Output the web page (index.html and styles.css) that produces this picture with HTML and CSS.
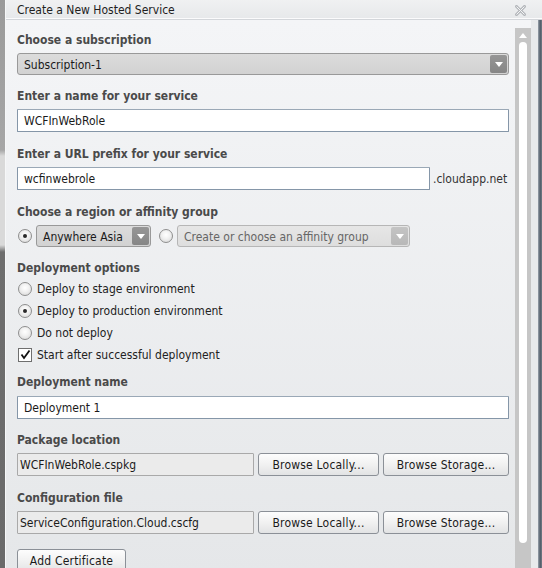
FILE: index.html
```html
<!DOCTYPE html>
<html>
<head>
<meta charset="utf-8">
<link rel="stylesheet" href="styles.css">
</head>
<body>
<div class="page">
  <div class="backdrop"></div>
  <div class="dialog">
    <div class="titlebar">
      <span class="title">Create a New Hosted Service</span>
      <svg class="close" width="11" height="11" viewBox="0 0 11 11"><path d="M1.5 1.5 L9.5 9.5 M9.5 1.5 L1.5 9.5" stroke="#b4b7bb" stroke-width="3" stroke-linecap="square"/><path d="M1.5 1.5 L9.5 9.5 M9.5 1.5 L1.5 9.5" stroke="#f4f5f6" stroke-width="1"/></svg>
    </div>
    <div class="body">
      <div class="content">
        <div class="label">Choose a subscription</div>
        <div class="select wide sel-first"><span class="sel-text">Subscription-1</span><span class="arrow"><svg width="8" height="5" viewBox="0 0 8 5"><path d="M0 0 H8 L4 5Z" fill="#fff"/></svg></span></div>

        <div class="label g12">Enter a name for your service</div>
        <div class="input wide">WCFInWebRole</div>

        <div class="label g13">Enter a URL prefix for your service</div>
        <div class="row">
          <div class="input url">wcfinwebrole</div>
          <span class="suffix">.cloudapp.net</span>
        </div>

        <div class="label g13">Choose a region or affinity group</div>
        <div class="row region">
          <span class="radio checked"></span>
          <div class="select region-sel"><span class="sel-text">Anywhere Asia</span><span class="arrow"><svg width="8" height="5" viewBox="0 0 8 5"><path d="M0 0 H8 L4 5Z" fill="#fff"/></svg></span></div>
          <span class="radio second"></span>
          <div class="select disabled affinity"><span class="sel-text">Create or choose an affinity group</span><span class="arrow"><svg width="8" height="5" viewBox="0 0 8 5"><path d="M0 0 H8 L4 5Z" fill="#fff"/></svg></span></div>
        </div>

        <div class="label g12 tight">Deployment options</div>
        <div class="options">
          <div class="opt"><span class="radio"></span><span>Deploy to stage environment</span></div>
          <div class="opt"><span class="radio checked"></span><span>Deploy to production environment</span></div>
          <div class="opt"><span class="radio"></span><span>Do not deploy</span></div>
          <div class="opt"><span class="check"><svg width="11" height="11" viewBox="0 0 11 11"><path d="M1.5 5.5 L4 9 L9.5 1.5" stroke="#111" stroke-width="1.8" fill="none"/></svg></span><span>Start after successful deployment</span></div>
        </div>

        <div class="label g8 loose">Deployment name</div>
        <div class="input wide">Deployment 1</div>

        <div class="label g12">Package location</div>
        <div class="row">
          <div class="input ro">WCFInWebRole.cspkg</div>
          <button class="btn local">Browse Locally...</button>
          <button class="btn storage">Browse Storage...</button>
        </div>

        <div class="label g13">Configuration file</div>
        <div class="row">
          <div class="input ro">ServiceConfiguration.Cloud.cscfg</div>
          <button class="btn local">Browse Locally...</button>
          <button class="btn storage">Browse Storage...</button>
        </div>

        <button class="btn cert">Add Certificate</button>
      </div>
      <div class="scrollbar">
        <div class="track">
          <svg class="up" width="8" height="5" viewBox="0 0 8 5"><path d="M0 5 H8 L4 0Z" fill="#fff"/></svg>
          <div class="thumb"></div>
        </div>
      </div>
      <div class="frame"></div>
    </div>
  </div>
</div>
</body>
</html>
```
FILE: styles.css
```css
html, body {
  margin: 0;
  padding: 0;
}
body {
  width: 542px;
  height: 568px;
  overflow: hidden;
  font-family: "DejaVu Sans Condensed", "DejaVu Sans", sans-serif;
  font-size: 12px;
  color: #222;
}
.page {
  display: flex;
  width: 542px;
  height: 568px;
}
.backdrop {
  width: 5px;
  flex: none;
  background: linear-gradient(to bottom, #9a9a9a 0, #a6a6a6 150px, #d9d9d9 156px, #d9d9d9 245px, #6e6e6e 252px, #6a6a6a 100%);
}
.dialog {
  flex: 1;
  display: flex;
  flex-direction: column;
  border-left: 1px solid #f6f7f8;
}
.titlebar {
  height: 19px;
  flex: none;
  display: flex;
  align-items: center;
  justify-content: space-between;
  padding: 0 16px 0 11px;
  background: linear-gradient(to bottom, #f0f1f2, #e6e8ea);
  border-bottom: 1px solid #d3d6da;
  box-shadow: inset 0 -1px 0 #fbfbfc;
}
.title {
  font-size: 12px;
  color: #1e1e1e;
  line-height: 19px;
  padding-top: 2px;
}
.close {
  display: block;
  margin-top: 2px;
}
.body {
  flex: 1;
  display: flex;
  background: linear-gradient(to bottom, #f4f5f7, #e5e7e9);
}
.content {
  flex: 1;
  padding: 11px 0 0 11px;
}
.label {
  font-weight: bold;
  color: #4a4a4a;
  line-height: 18px;
  height: 16px;
  margin-bottom: 6px;
}
.label.g12 { margin-top: 12px; }
.label.g13 { margin-top: 13px; }
.label.g8 { margin-top: 8px; }
.label.tight { margin-bottom: 2px; }
.label.loose { margin-bottom: 7px; }
.row {
  display: flex;
  align-items: center;
}
.input {
  box-sizing: border-box;
  height: 23px;
  line-height: 22px;
  padding: 0 6px;
  background: #fff;
  border: 1px solid #8596a8;
  border-top-color: #9aa8b6;
  border-radius: 1px;
  color: #1a1a1a;
  white-space: nowrap;
}
.wide { width: 492px; }
.url { width: 413px; }
.suffix {
  margin-left: 3px;
  color: #333;
}
.input.ro {
  width: 237px;
  background: #ebebeb;
  border-color: #a9a9a9;
  padding: 0 2px;
}
.select {
  box-sizing: border-box;
  height: 23px;
  display: flex;
  align-items: center;
  justify-content: space-between;
  background: linear-gradient(to bottom, #dcdcdc, #d2d2d2);
  border: 1px solid #999;
  border-radius: 3px;
  padding: 0 0 0 6px;
  color: #1a1a1a;
}
.sel-text { padding-top: 1px; }
.sel-first { height: 22px; }
.select .arrow {
  width: 17px;
  height: 18px;
  margin-right: 1px;
  background: linear-gradient(to bottom, #969696, #868686);
  border-radius: 2px;
  display: flex;
  align-items: center;
  justify-content: center;
}
.select .arrow svg { display: block; }
.region { height: 22px; }
.region .select { height: 22px; }
.region-sel { width: 115px; margin-left: 4px; }
.affinity { width: 233px; margin-left: 4px; }
.select.disabled {
  background: linear-gradient(to bottom, #e6e6e6, #dedede);
  border-color: #b6b6b6;
  color: #666;
}
.select.disabled .arrow {
  background: linear-gradient(to bottom, #c4c4c4, #b8b8b8);
}
.radio {
  box-sizing: border-box;
  width: 14px;
  height: 14px;
  flex: none;
  border-radius: 50%;
  border: 1px solid #8e8e8e;
  background: radial-gradient(circle at 50% 40%, #ffffff 0, #f2f2f2 40%, #d4d4d4 100%);
  margin-left: 1px;
  position: relative;
}
.radio.checked::after {
  content: "";
  position: absolute;
  left: 4px;
  top: 4px;
  width: 4px;
  height: 4px;
  border-radius: 50%;
  background: #2a2a2a;
}
.radio.second { margin-left: 8px; }
.options {
  display: flex;
  flex-direction: column;
}
.opt {
  height: 22px;
  display: flex;
  align-items: center;
  gap: 5px;
  color: #222;
  padding-top: 1px;
  box-sizing: border-box;
}
.check {
  box-sizing: border-box;
  width: 14px;
  height: 14px;
  margin-left: 1px;
  border: 1px solid #6f6f6f;
  background: #fff;
  display: flex;
  align-items: center;
  justify-content: center;
}
.check svg { display: block; }
.btn {
  box-sizing: border-box;
  height: 23px;
  font-family: inherit;
  font-size: 12px;
  color: #1a1a1a;
  border: 1px solid #8b9097;
  border-radius: 3px;
  background: linear-gradient(to bottom, #fdfdfd 0, #f1f1f1 50%, #e2e3e4 100%);
  padding: 1px 0 0 0;
  margin: 0;
  letter-spacing: 0.2px;
}
.local { width: 121px; margin-left: 4px; }
.storage { width: 126px; margin-left: 4px; }
.cert {
  width: 109px;
  margin-top: 15px;
  height: 24px;
  padding-top: 0;
  display: block;
}
.scrollbar {
  width: 16px;
  flex: none;
  padding-top: 8px;
  margin-left: 5px;
}
.track {
  height: 100%;
  background: #c6c6c6;
  display: flex;
  flex-direction: column;
  align-items: center;
  padding-top: 5px;
  box-sizing: border-box;
}
.up { display: block; }
.thumb {
  width: 8px;
  height: 501px;
  margin-top: 4px;
  background: #fff;
  border-radius: 4px;
}
.frame {
  width: 11px;
  flex: none;
  background: linear-gradient(to right, #e8eaec 0, #e8eaec 7px, #9aa3ad 7px, #56616d 9px, #56616d 10px, #7d868f 11px);
}
```
